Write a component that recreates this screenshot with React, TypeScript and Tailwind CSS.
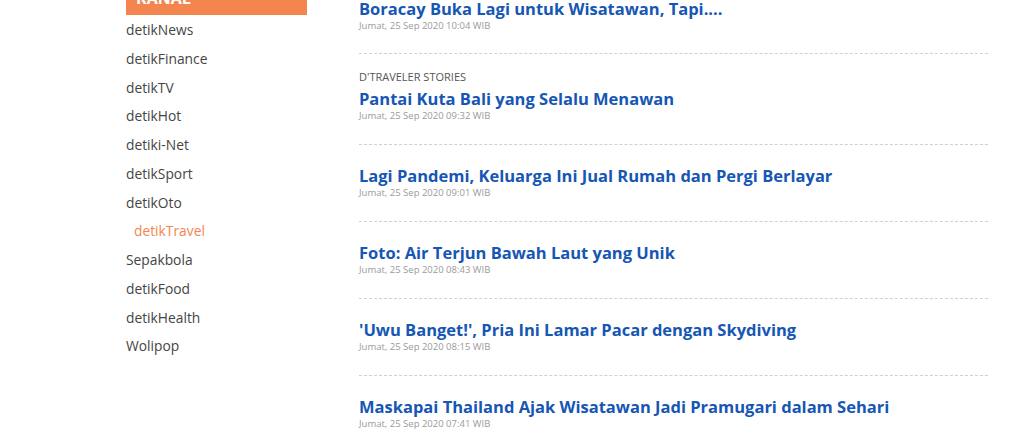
import React from 'react';

const KANAL = [
  'detikNews',
  'detikFinance',
  'detikTV',
  'detikHot',
  'detiki-Net',
  'detikSport',
  'detikOto',
  'detikTravel',
  'Sepakbola',
  'detikFood',
  'detikHealth',
  'Wolipop',
];

interface Article {
  title: string;
  date: string;
  label?: string;
}

const ARTICLES: Article[] = [
  { title: 'Boracay Buka Lagi untuk Wisatawan, Tapi....', date: 'Jumat, 25 Sep 2020 10:04 WIB' },
  { label: "D'TRAVELER STORIES", title: 'Pantai Kuta Bali yang Selalu Menawan', date: 'Jumat, 25 Sep 2020 09:32 WIB' },
  { title: 'Lagi Pandemi, Keluarga Ini Jual Rumah dan Pergi Berlayar', date: 'Jumat, 25 Sep 2020 09:01 WIB' },
  { title: 'Foto: Air Terjun Bawah Laut yang Unik', date: 'Jumat, 25 Sep 2020 08:43 WIB' },
  { title: "'Uwu Banget!', Pria Ini Lamar Pacar dengan Skydiving", date: 'Jumat, 25 Sep 2020 08:15 WIB' },
  { title: 'Maskapai Thailand Ajak Wisatawan Jadi Pramugari dalam Sehari', date: 'Jumat, 25 Sep 2020 07:41 WIB' },
];

export default function App() {
  return (
    <div className="h-[438px] overflow-hidden bg-white font-['Open_Sans',sans-serif]">
      <div className="-mt-[26px] flex pl-[126px]">
        {/* Sidebar */}
        <aside className="w-[181px] shrink-0">
          <div className="h-[41px] bg-[#f5854f] px-[10px] pt-[16px] text-[16px] font-bold leading-none text-white">
            KANAL
          </div>
          <ul className="mt-[1px]">
            {KANAL.map((k) => (
              <li
                key={k}
                className={
                  k === 'detikTravel'
                    ? 'h-[28.75px] pl-[8px] text-[13.8px] leading-[28.75px] font-medium text-[#f5854f]'
                    : 'h-[28.75px] text-[13.8px] leading-[28.75px] text-[#454545]'
                }
              >
                {k}
              </li>
            ))}
          </ul>
        </aside>

        {/* Article list */}
        <main className="ml-[52px] w-[629px]">
          {ARTICLES.map((a, i) => (
            <div
              key={i}
              className={
                i === 0
                  ? 'border-b border-dashed border-[#d0d0d0] pt-[24px] pb-[21px]'
                  : 'border-b border-dashed border-[#d0d0d0] pt-[16px] pb-[22px]'
              }
            >
              {a.label && (
                <div className="mb-[4px] text-[11px] leading-[14px] text-[#555]">{a.label}</div>
              )}
              <h2
                className={
                  a.label || i === 0
                    ? 'text-[16.5px] leading-[22px] font-bold text-[#1656b4]'
                    : 'mt-[4px] text-[16.5px] leading-[22px] font-bold text-[#1656b4]'
                }
              >
                {a.title}
              </h2>
              <div className="text-[9.5px] leading-[12px] text-[#9a9a9a]">{a.date}</div>
            </div>
          ))}
        </main>
      </div>
    </div>
  );
}
